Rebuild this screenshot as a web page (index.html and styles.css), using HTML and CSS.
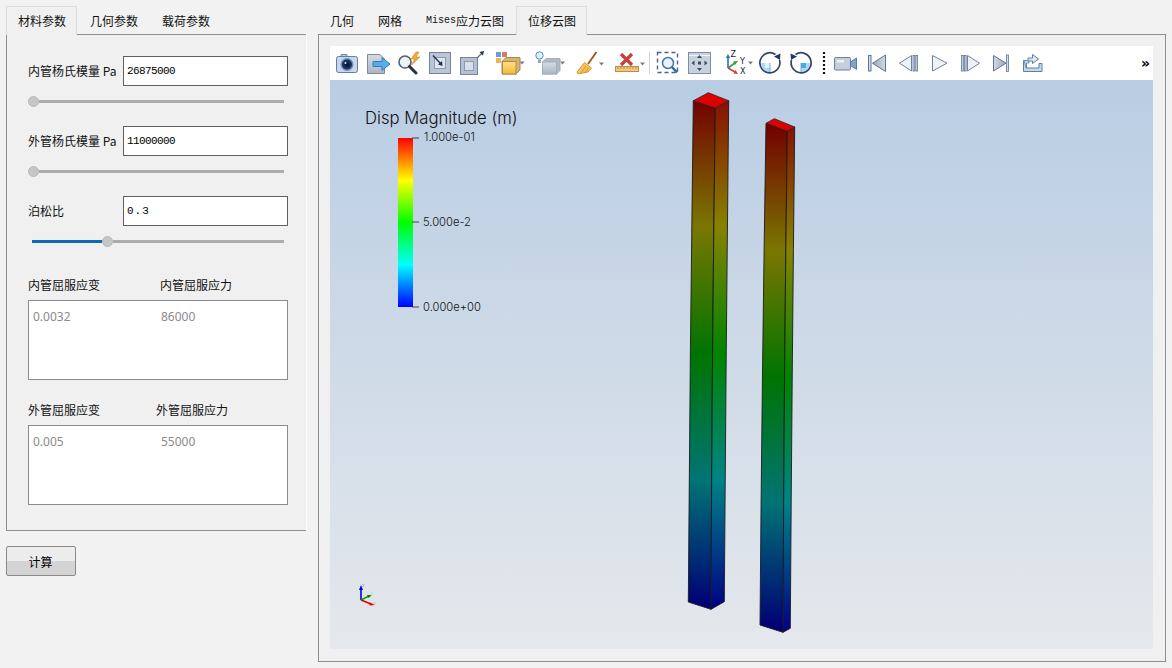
FILE: index.html
```html
<!DOCTYPE html>
<html lang="zh">
<head>
<meta charset="utf-8">
<title>位移云图</title>
<link rel="stylesheet" href="styles.css">
</head>
<body>
<svg class="defs" width="0" height="0" aria-hidden="true">
  <defs>
    <linearGradient id="steel" x1="0" y1="0" x2="0" y2="1"><stop offset="0" stop-color="#d5dce6"/><stop offset="1" stop-color="#aab6c7"/></linearGradient>
    <linearGradient id="gold" x1="0" y1="0" x2="0" y2="1"><stop offset="0" stop-color="#ffe08a"/><stop offset="1" stop-color="#f7b733"/></linearGradient>
    <linearGradient id="grayblue" x1="0" y1="0" x2="1" y2="0"><stop offset="0" stop-color="#98a6b8"/><stop offset="1" stop-color="#d3dae4"/></linearGradient>
    <linearGradient id="grayblue2" x1="1" y1="0" x2="0" y2="0"><stop offset="0" stop-color="#98a6b8"/><stop offset="1" stop-color="#d3dae4"/></linearGradient>
  </defs>
</svg>
<div class="app">
  <section class="left">
    <nav class="tabs">
      <span class="tab active">材料参数</span>
      <span class="tab">几何参数</span>
      <span class="tab">载荷参数</span>
    </nav>
    <div class="panel form">
      <div class="field"><label class="field-label">内管杨氏模量 Pa</label><div class="input">26875000</div></div>
      <div class="slider"><i class="knob"></i><i class="rest"></i></div>
      <div class="field next"><label class="field-label">外管杨氏模量 Pa</label><div class="input">11000000</div></div>
      <div class="slider"><i class="knob"></i><i class="rest"></i></div>
      <div class="field next"><label class="field-label">泊松比</label><div class="input spaced">0.3</div></div>
      <div class="slider inset"><i class="fill" style="width:70px"></i><i class="knob"></i><i class="rest"></i></div>

      <div class="heads first"><span class="head-a">内管屈服应变</span><span>内管屈服应力</span></div>
      <div class="box"><span class="box-a">0.0032</span><span>86000</span></div>
      <div class="heads second"><span class="head-b">外管屈服应变</span><span>外管屈服应力</span></div>
      <div class="box"><span class="box-a">0.005</span><span>55000</span></div>
    </div>
    <button class="calc" type="button">计算</button>
  </section>

  <section class="right">
    <nav class="tabs">
      <span class="tab">几何</span>
      <span class="tab">网格</span>
      <span class="tab"><span class="mono">Mises</span>应力云图</span>
      <span class="tab active">位移云图</span>
    </nav>
    <div class="panel viewer">
      <div class="toolbar">
        <svg width="30" height="34" viewBox="0 0 30 34"><path d="M6 11V8.5h6V11" fill="#b8c8dc" stroke="#6f8db5"/><rect x="1.5" y="10.5" width="21" height="16" rx="2" fill="#c9d7e9" stroke="#5f7fa8"/><circle cx="12" cy="18.5" r="6.5" fill="#6e8fbd"/><circle cx="12" cy="18.5" r="5" fill="#17305f"/><circle cx="12" cy="18.5" r="2.5" fill="#0c1a3e"/><circle cx="10.5" cy="17" r="1" fill="#dfe9f6"/></svg>
        <svg width="30" height="34" viewBox="0 0 30 34"><path d="M2.5 8.5H15L19.5 13V27.5H2.5Z" fill="url(#steel)" stroke="#85878c"/><path d="M8 15.5H17V11.5L25 18L17 24.5V20.5H8Z" fill="#58ace9" stroke="#3a7db5"/></svg>
        <svg width="32" height="34" viewBox="0 0 32 34"><circle cx="10" cy="16" r="6" fill="#eef2f7" stroke="#55606f" stroke-width="1.6"/><path d="M14.5 20.5L21 27" stroke="#2b2f38" stroke-width="3" stroke-linecap="round"/><path d="M21 6L16 13H19.5L16.5 19L25 11H21L24 6Z" fill="#f2a93b" stroke="#d4861e" stroke-width=".6"/></svg>
        <svg width="30" height="34" viewBox="0 0 30 34"><rect x="2.5" y="6.5" width="21" height="21" fill="#bac6d7" stroke="#73849c"/><rect x="7.5" y="11.5" width="11" height="11" fill="#e0e6ee" stroke="#8c9bb0"/><path d="M6 9.5L14 18" stroke="#1e3558" stroke-width="1.4"/><path d="M15.5 20L15 15L11 18.5Z" fill="#1e3558"/></svg>
        <svg width="36" height="34" viewBox="0 0 36 34"><rect x="3.5" y="11.5" width="17" height="17" fill="#b5c1d2" stroke="#73849c"/><rect x="7.5" y="15.5" width="9" height="9" fill="#d8dfe8" stroke="#8c9bb0"/><path d="M20 12L25 7" stroke="#5a6f8f" stroke-width="1.3"/><path d="M27 5L22.5 6L26 9.5Z" fill="#1e3558"/></svg>
        <svg width="40" height="34" viewBox="0 0 40 34"><rect x="3" y="6" width="5" height="5" fill="#6c9fd8"/><rect x="9" y="6" width="5" height="5" fill="#d8796c"/><rect x="3" y="12" width="5" height="5" fill="#efb45a"/><path d="M9 15.5L13 11.5H27V24L23 28H9Z" fill="#d8b469" stroke="#a8895a"/><rect x="9.5" y="15.5" width="13.5" height="12.5" fill="url(#gold)" stroke="#a8895a"/><path d="M26.5 15.5h5l-2.5 3z" fill="#7c7c7c"/></svg>
        <svg width="41" height="34" viewBox="0 0 41 34"><circle cx="6.5" cy="9.5" r="3.7" fill="#dff0fc" stroke="#4f8ec9"/><path d="M5 13.5H8V17H5Z" fill="#9aa8ba"/><path d="M9.5 16L13 12.5H27V24.5L23.5 28H9.5Z" fill="#aeb8c6" stroke="#a3aebb"/><rect x="9.5" y="16" width="14" height="12" fill="url(#steel)" stroke="#a3aebb"/><path d="M27 15.5h5l-2.5 3z" fill="#7c7c7c"/></svg>
        <svg width="40" height="34" viewBox="0 0 40 34"><path d="M22.5 6L14 18" stroke="#a35b1d" stroke-width="2"/><path d="M10.5 16.5L17.5 22L14 26L4 28L3 26Z" fill="#f4c255" stroke="#c9892a" stroke-width=".8"/><path d="M12 20L7 27M14.5 22L11 27" stroke="#c9892a" stroke-width=".8"/><path d="M25 16.5h5l-2.5 3z" fill="#7c7c7c"/></svg>
        <svg width="33" height="34" viewBox="0 0 33 34"><path d="M7 8L18 19M18 8L7 19" stroke="#c93f3f" stroke-width="3.2"/><rect x="1.5" y="20.5" width="23" height="5" fill="#f3c77d" stroke="#bd8e47"/><path d="M4 21v2M7 21v2M10 21v2M13 21v2M16 21v2M19 21v2M22 21v2" stroke="#a87a38" stroke-width=".8"/><path d="M26 16.5h5l-2.5 3z" fill="#7c7c7c"/></svg>
        <svg width="8" height="34" viewBox="0 0 8 34"><path d="M2.5 6V28" stroke="#cfcfcf"/></svg>
        <svg width="31" height="34" viewBox="0 0 31 34"><rect x="2.5" y="6.5" width="20" height="20" fill="none" stroke="#4a6286" stroke-width="1.4" stroke-dasharray="4 3"/><circle cx="13" cy="17" r="5.5" fill="#eaf3fb" stroke="#3f78ae" stroke-width="1.5"/><path d="M17 21L22 26.5" stroke="#2f6ba8" stroke-width="2.6"/></svg>
        <svg width="39" height="34" viewBox="0 0 39 34"><rect x="2.5" y="6.5" width="22" height="21" fill="#c9d1dd" stroke="#7f8ea3"/><path d="M3 9.5H24" stroke="#f0f3f7"/><path d="M13.5 9L11 12H16ZM13.5 25L11 22H16ZM5.5 17L8.5 14.5V19.5ZM21.5 17L18.5 14.5V19.5Z" fill="#344a6c"/><rect x="12" y="15.5" width="3" height="3" fill="#344a6c"/></svg>
        <svg width="33" height="34" viewBox="0 0 33 34"><path d="M3 22V11" stroke="#2f6fc6" stroke-width="1.6"/><path d="M3 8L.8 12H5.2Z" fill="#2f6fc6"/><path d="M3 22L10 17" stroke="#2e9a45" stroke-width="1.6"/><path d="M13 15L8 15.5L10 19Z" fill="#2e9a45"/><path d="M3 22L10 26" stroke="#d13a3a" stroke-width="1.6"/><path d="M13 28L8.5 27.5L10.5 24Z" fill="#d13a3a"/><text class="axis-t" x="5.5" y="11">Z</text><text class="axis-t" x="15" y="18">Y</text><text class="axis-t" x="15" y="28">X</text><path d="M23 15.5h5l-2.5 3z" fill="#7c7c7c"/></svg>
        <svg width="30" height="34" viewBox="0 0 30 34"><path d="M12 17H3A9 9 0 0 0 12 26Z" fill="#a8d9f5"/><rect x="7" y="17" width="5" height="5" fill="#e3f3fc"/><path d="M12 17V26" stroke="#5e9cc9" stroke-width=".8"/><path d="M17.500 8.500A10 10 0 1 0 21.500 14" fill="none" stroke="#33456a" stroke-width="1.7"/><path d="M22.500 7.500L22 14L16 10.500Z" fill="#1f3a68"/></svg>
        <svg width="32" height="34" viewBox="0 0 32 34"><path d="M13 17H22A9 9 0 0 1 13 26Z" fill="#a8d9f5"/><rect x="13" y="17" width="5" height="5" fill="#4fa9e0"/><path d="M13 17V26" stroke="#5e9cc9" stroke-width=".8"/><path d="M7.500 8.500A10 10 0 1 1 3.500 14" fill="none" stroke="#33456a" stroke-width="1.7"/><path d="M2.500 7.500L3 14L9 10.500Z" fill="#1f3a68"/></svg>
        <svg width="12" height="34" viewBox="0 0 12 34"><path d="M4 6V28" stroke="#111" stroke-width="2.2" stroke-dasharray="2 2"/></svg>
        <svg width="34" height="34" viewBox="0 0 34 34"><rect x="2.500" y="11.500" width="16" height="12.500" rx="1" fill="#c5cfdc" stroke="#6d7f9c"/><rect x="5" y="14" width="7" height="2.500" fill="#eef2f7"/><path d="M18.500 16L24.500 12V23.500L18.500 19.500Z" fill="#7fa6cf" stroke="#5b7ba6"/></svg>
        <svg width="30" height="34" viewBox="0 0 30 34"><rect x="2.500" y="9.500" width="2.500" height="15.500" fill="#d4dbe5" stroke="#5d7499"/><path d="M19.500 9V25.500L6.500 17.200Z" fill="url(#grayblue)" stroke="#5d7499"/></svg>
        <svg width="33" height="34" viewBox="0 0 33 34"><path d="M15.500 9.500V25L3.500 17.200Z" fill="#eef2f7" stroke="#6b82a6"/><rect x="17" y="9.500" width="1.800" height="15.500" fill="#d4dbe5" stroke="#5d7499" stroke-width=".8"/><rect x="19.800" y="9.500" width="1.800" height="15.500" fill="#d4dbe5" stroke="#5d7499" stroke-width=".8"/></svg>
        <svg width="30" height="34" viewBox="0 0 30 34"><path d="M3.500 9.500V25L18 17.200Z" fill="#eef2f7" stroke="#6b82a6"/></svg>
        <svg width="31" height="34" viewBox="0 0 31 34"><rect x="2.500" y="9.500" width="1.800" height="15.500" fill="#d4dbe5" stroke="#5d7499" stroke-width=".8"/><rect x="5.300" y="9.500" width="1.800" height="15.500" fill="#d4dbe5" stroke="#5d7499" stroke-width=".8"/><path d="M8.500 9.500V25L20.500 17.200Z" fill="#eef2f7" stroke="#6b82a6"/></svg>
        <svg width="31" height="34" viewBox="0 0 31 34"><path d="M3.500 9.500V25L16 17.200Z" fill="url(#grayblue2)" stroke="#5d7499"/><rect x="16.500" y="9" width="2" height="16.500" fill="#d4dbe5" stroke="#5d7499" stroke-width=".8"/></svg>
        <svg width="33" height="34" viewBox="0 0 33 34"><path d="M2.500 14.500H5.500V22H18V17.500H21V25.500H2.500Z" fill="#c7d7ea" stroke="#5d7fa8"/><path d="M3 14.500H8V17H5.500V22H5Z" fill="#c7d7ea" stroke="#5d7fa8" stroke-width=".8"/><path d="M7 15V12H11.500V8.500L17.500 13L11.500 17.500V15Z" fill="#dbe7f4" stroke="#5d7fa8"/></svg>
        <span class="more">»</span>
      </div>
      <div class="scene">
        <svg class="canvas" viewBox="330 80 823 569" role="img" aria-label="位移云图">
          <defs>
            <linearGradient id="bar" x1="0" y1="0" x2="0" y2="1">
              <stop offset="0" stop-color="#ff0000"/><stop offset=".25" stop-color="#ffff00"/><stop offset=".5" stop-color="#00ff00"/><stop offset=".75" stop-color="#00ffff"/><stop offset="1" stop-color="#0000ff"/>
            </linearGradient>
            <linearGradient id="c1l" gradientUnits="userSpaceOnUse" x1="0" y1="100" x2="0" y2="606">
              <stop offset="0" stop-color="#720000"/><stop offset=".25" stop-color="#7a7600"/><stop offset=".5" stop-color="#007400"/><stop offset=".75" stop-color="#007474"/><stop offset="1" stop-color="#000074"/>
            </linearGradient>
            <linearGradient id="c1r" gradientUnits="userSpaceOnUse" x1="0" y1="100" x2="0" y2="606">
              <stop offset="0" stop-color="#861000"/><stop offset=".25" stop-color="#868200"/><stop offset=".5" stop-color="#008400"/><stop offset=".75" stop-color="#008484"/><stop offset="1" stop-color="#000484"/>
            </linearGradient>
            <linearGradient id="c2l" gradientUnits="userSpaceOnUse" x1="0" y1="125" x2="0" y2="628">
              <stop offset="0" stop-color="#720000"/><stop offset=".25" stop-color="#7a7600"/><stop offset=".5" stop-color="#007400"/><stop offset=".75" stop-color="#007474"/><stop offset="1" stop-color="#000074"/>
            </linearGradient>
            <linearGradient id="c2r" gradientUnits="userSpaceOnUse" x1="0" y1="125" x2="0" y2="628">
              <stop offset="0" stop-color="#861000"/><stop offset=".25" stop-color="#868200"/><stop offset=".5" stop-color="#008400"/><stop offset=".75" stop-color="#008484"/><stop offset="1" stop-color="#000484"/>
            </linearGradient>
          </defs>

          <text class="legend-title" x="365" y="124">Disp Magnitude (m)</text>
          <rect x="398" y="138" width="15" height="169" fill="url(#bar)"/>
          <path d="M412 138H419M412 222H419M412 307H419" stroke="#444" stroke-width="1"/>
          <text class="legend-label" x="424" y="141">1.000e-01</text>
          <text class="legend-label" x="423" y="226">5.000e-2</text>
          <text class="legend-label" x="423" y="311">0.000e+00</text>

          <path d="M693.300 100.700Q690 350 688.300 602L711 609.300Q712 350 715.300 108Z" fill="url(#c1l)" stroke="#1a1a22" stroke-width=".9"/>
          <path d="M715.300 108L728.700 100.700Q726 350 724.300 601.700L711 609.300Q712 350 715.300 108Z" fill="url(#c1r)" stroke="#1a1a22" stroke-width=".9"/>
          <path d="M693.300 100.700L708.300 92.700L728.700 100.700L715.300 108Z" fill="#dc0000" stroke="#3a2020" stroke-width=".8"/>

          <path d="M766 123.300Q762 370 760 625L783 632.300Q784 370 787.300 131Z" fill="url(#c2l)" stroke="#1a1a22" stroke-width=".9"/>
          <path d="M787.300 131L794.700 127Q792 370 790.300 628.300L783 632.300Q784 370 787.300 131Z" fill="url(#c2r)" stroke="#1a1a22" stroke-width=".9"/>
          <path d="M766 123.300L774.300 118.700L794.700 127L787.300 131Z" fill="#dc0000" stroke="#3a2020" stroke-width=".8"/>

          <path d="M361 600V588" stroke="#0000e0" stroke-width="1.6"/><path d="M361 585L359 590H363Z" fill="#0000e0"/>
          <path d="M361 600L369 596" stroke="#00b000" stroke-width="1.6"/><path d="M372 595L367 595L368.500 598Z" fill="#008000"/>
          <path d="M361 600L371 604" stroke="#e00000" stroke-width="1.6"/><path d="M375 605L370 602.500L369.500 605.500Z" fill="#e00000"/>
          <text class="triad z" x="362" y="587">z</text>
          <text class="triad y" x="370" y="595">y</text>
          <text class="triad x" x="373" y="605">x</text>
        </svg>
      </div>
    </div>
  </section>
</div>
</body>
</html>
```
FILE: styles.css
```css
* { box-sizing: border-box; }

html, body {
  margin: 0;
  height: 100%;
}

body {
  background: #f2f2f2;
  color: #111;
  font-family: "Noto Sans CJK SC", "Noto Sans", sans-serif;
  font-size: 12px;
  overflow: hidden;
}

.defs { position: absolute; }

.app {
  display: flex;
  gap: 12px;
  padding: 6px 0 0 6px;
  height: 668px;
}

.left { width: 300px; display: flex; flex-direction: column; align-items: flex-start; }
.right { width: 848px; display: flex; flex-direction: column; }

.tabs {
  display: flex;
  height: 28px;
  position: relative;
  z-index: 1;
  flex: none;
}

.tab {
  padding: 0 11px;
  height: 28px;
  line-height: 28px;
  white-space: nowrap;
  border: 1px solid transparent;
  border-bottom: 0;
  color: #111;
  display: flex;
  align-items: center;
}

.tab.active {
  background: #f0f0f0;
  border-color: #dcdcdc;
  height: 29px;
  padding-right: 10px;
  margin-right: 1px;
}

.mono { font-family: "Liberation Mono", monospace; font-size: 10px; }

.panel {
  background: #f0f0f0;
  border: 1px solid #8e8e96;
}

.form {
  width: 300px;
  height: 497px;
  border-right: 0;
  padding: 21px 0 0 21px;
  box-shadow: 1px 0 0 #fbfbfb;
}

.field { display: flex; align-items: center; width: 260px; }
.field.next { margin-top: 19px; }
.field-label { width: 95px; flex: none; white-space: nowrap; padding-bottom: 2px; }

.input {
  width: 165px;
  height: 30px;
  line-height: 29px;
  padding-left: 3px;
  background: #fff;
  border: 1px solid #5f5f64;
  font-family: "Liberation Mono", monospace;
  font-size: 11px;
  letter-spacing: -0.6px;
  color: #000;
}
.input.spaced { letter-spacing: 1px; }

.slider {
  display: flex;
  align-items: center;
  width: 256px;
  height: 12px;
  margin-top: 9px;
}
.slider.inset { padding-left: 4px; }
.fill { display: block; height: 3px; background: #0f68b8; flex: none; }
.rest { display: block; height: 3px; background: #acacac; flex: 1; }
.knob {
  display: block;
  width: 11px;
  height: 11px;
  flex: none;
  border-radius: 50%;
  background: #c6c6c6;
  border: 1px solid #b8b8b8;
}

.heads { display: flex; height: 18px; line-height: 18px; white-space: nowrap; }
.heads.first { margin-top: 29px; }
.heads.second { margin-top: 21px; }
.head-a { width: 132px; }
.head-b { width: 128px; }

.box {
  display: flex;
  width: 260px;
  height: 80px;
  margin-top: 6px;
  padding: 7px 0 0 4px;
  line-height: 18px;
  background: #fff;
  border: 1px solid #8a8a94;
  color: #8a8a8a;
  font-family: "Noto Sans", sans-serif;
}
.box-a { width: 128px; }

.calc {
  width: 70px;
  height: 30px;
  margin-top: 15px;
  padding: 0 1px 0 0;
  font: inherit;
  color: #000;
  border: 1px solid #8a8a8a;
  border-radius: 2px;
  background: linear-gradient(#ececec 0, #ececec 50%, #d4d4d4 50%, #d4d4d4 100%);
}

.viewer {
  height: 628px;
  padding: 11px 12px 12px 11px;
  display: flex;
  flex-direction: column;
}

.toolbar {
  height: 34px;
  flex: none;
  display: flex;
  align-items: center;
  background: #fff;
  padding: 0 3px 0 5px;
}
.toolbar svg { flex: none; display: block; }

.axis-t { font: 8px "DejaVu Sans", sans-serif; fill: #222; }

.more {
  margin-left: auto;
  font: bold 14px "DejaVu Sans", sans-serif;
  color: #000;
  line-height: 34px;
}

.scene {
  flex: 1;
  position: relative;
  background: linear-gradient(#b9cde3, #e5e8ec);
}

.canvas { position: absolute; inset: 0; width: 100%; height: 100%; display: block; }

.legend-title { font: 300 16.7px Inter, "DejaVu Sans", sans-serif; fill: #111; }
.legend-label { font: 300 11.2px Inter, "DejaVu Sans", sans-serif; fill: #111; }

.triad { font: 5px "DejaVu Sans", sans-serif; }
.triad.z { fill: #9a9ae6; }
.triad.y { fill: #a6e0a6; }
.triad.x { fill: #e89a9a; }
```
